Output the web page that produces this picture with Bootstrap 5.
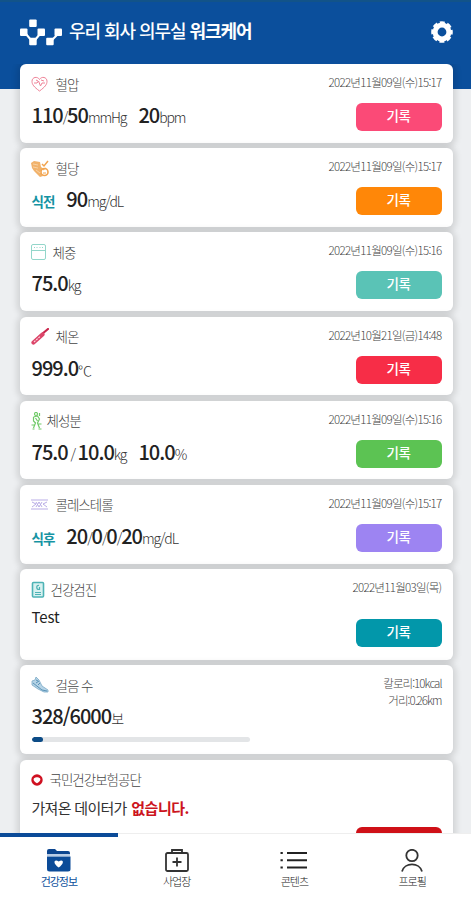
<!DOCTYPE html>
<html lang="ko">
<head>
<meta charset="utf-8">
<meta name="viewport" content="width=device-width, initial-scale=1">
<title>워크케어</title>
<link href="https://cdn.jsdelivr.net/npm/bootstrap@5.3.0/dist/css/bootstrap.min.css" rel="stylesheet">
<style>
body{height:900px;overflow:hidden;background:#edeff1;font-family:"Noto Sans CJK KR",sans-serif;letter-spacing:-1px;color:#222}
svg{display:block;flex:none}
.page-top{height:89px;background:#0b4f9c;border-top:2px solid #125389;padding:16px 17px 0 20px;margin-bottom:-25px}
.page-title{font-size:18px;line-height:26px;font-weight:500;letter-spacing:-1.05px;margin:-1px 0 0 6px;color:#fff}
.page-title b{font-weight:700}
.gear{margin-top:2px}
.feed{height:769px;overflow:hidden;padding:0 18px 0 20px;gap:5.6px}
.tile{flex:none;height:78.6px;background:#fff;border-radius:6px;padding:10px 11.5px 0;box-shadow:0 1px 6px 3px rgba(0,0,0,.12)}
.tile-exam{height:90.6px}.tile-walk{height:89px}.tile-nhis{height:110px}
.tile-name{height:20px;font-size:13.5px;font-weight:300;color:#444;line-height:20px;margin-left:-1px}
.tile-name span{margin-top:-1px}
.tile-val{height:32px;margin-top:5px;font-size:20px;line-height:31px;font-weight:500;white-space:pre}
.unit{font-size:14px;font-weight:300;color:#333;letter-spacing:-1.15px}
.second{margin-left:3px}
.meal{font-size:13.5px;font-weight:700;color:#1593a3;margin-right:12px}
.stamp{font-size:11.5px;font-weight:300;line-height:16px;color:#444;letter-spacing:-.7px;white-space:nowrap}
.stamp + .stamp{margin-top:1px}
.stamp-walk{letter-spacing:-.95px}
.rec{width:86px;height:28px;border-radius:6px;color:#fff;font-size:13.5px;font-weight:500;line-height:25px;text-align:center;margin-top:13px;letter-spacing:-.5px}
.rec-exam{margin-top:24px}
.note{font-size:15px;line-height:23px;margin-top:6px;font-weight:400}
.note-kr{letter-spacing:-.7px;color:#333}
.note-kr b{color:#cc1420;margin-left:1px;letter-spacing:-.45px}
.note-test{letter-spacing:-.1px}
.walkbar{width:218px;height:5px;border-radius:3px;background:#e3e5e7;margin-top:5px}
.walkbar .progress-bar{background:#0c4b86;border-radius:3px}
.tabs{height:67px;background:#fff;border-top:1px solid #eee}
.tab{font-size:11px;font-weight:300;line-height:14px;color:#222;padding-top:15px}
.tab-on{color:#0b4f9c;font-weight:400;border-top:4px solid #0b4b98;padding-top:12px;margin-top:-1px}
.tab svg{margin-bottom:2px}
</style>
<script src="https://cdn.jsdelivr.net/npm/bootstrap@5.3.0/dist/js/bootstrap.bundle.min.js"></script>
</head>
<body>
<header class="page-top d-flex align-items-start">
  <svg width="43" height="29" viewBox="0 0 43 29"><g stroke="#fff" stroke-width="2" fill="none"><path d="M6 16l5 6M20 16l-5 6M32 22l5-5" /></g><g fill="#fff"><rect x="9.200" y="1.500" width="7.500" height="7.500" rx="1"/><rect x="0" y="10.500" width="7.500" height="7.500" rx="1"/><rect x="17.500" y="10.500" width="7.500" height="7.500" rx="1"/><rect x="9.200" y="19.700" width="7.500" height="7.500" rx="1"/><rect x="26.200" y="19.700" width="7.500" height="7.500" rx="1"/><rect x="34.500" y="10.500" width="7.500" height="7.500" rx="1"/></g></svg>
  <h1 class="page-title">우리 회사 의무실 <b>워크케어</b></h1>
  <svg class="ms-auto gear" width="24" height="24" viewBox="0 0 24 24"><circle cx="12" cy="12" r="6.900" fill="none" stroke="#fff" stroke-width="5"/><circle cx="12" cy="12" r="9.300" fill="none" stroke="#fff" stroke-width="3" stroke-dasharray="4.800 2.504" stroke-dashoffset="2.400"/></svg>
</header>

<main class="feed d-flex flex-column">
  <section class="tile d-flex justify-content-between">
    <div>
      <div class="tile-name d-flex align-items-center"><svg width="17" height="16" viewBox="0 0 17 16" class="me-2" fill="none" stroke="#ef8297" stroke-width="1"><path d="M8.500 15C3 11 1 8.500 1 5.300C1 1 6.500 0 8.500 3.500C10.500 0 16 1 16 5.300C16 8.500 14 11 8.500 15zM3 7h3l1.500-2 2 5 1.500-3h3M5 4l2 1M10 4l3 1"/></svg><span>혈압</span></div>
      <div class="tile-val">110<span class="unit">/</span>50<span class="unit">mmHg</span>  <span class="second">20</span><span class="unit">bpm</span></div>
    </div>
    <div class="d-flex flex-column align-items-end"><div class="stamp">2022년11월09일(수)15:17</div><div class="rec" style="background:#fb4a77">기록</div></div>
  </section>
  <section class="tile d-flex justify-content-between">
    <div>
      <div class="tile-name d-flex align-items-center"><svg width="18" height="17" viewBox="0 0 18 17" style="margin-right:7px"><path d="M0 3l3-2 6 1 1 5 3 2-4 3 3 4-3 1-6-6-2-3z" fill="#f1b26b"/><path d="M2 4l5 1M2 7l5 1M5 10l4 3" stroke="#fbe0bd" stroke-width=".7"/><path d="M11 4l2 2 4-5" fill="none" stroke="#f2a44e" stroke-width="1.500"/><circle cx="13.500" cy="12" r="3.500" fill="#fff" stroke="#f2a44e" stroke-width="1.600"/><path d="M12 10l3-2M12 13h3" stroke="#f2a44e"/></svg><span>혈당</span></div>
      <div class="tile-val"><span class="meal">식전</span>90<span class="unit">mg/dL</span></div>
    </div>
    <div class="d-flex flex-column align-items-end"><div class="stamp">2022년11월09일(수)15:17</div><div class="rec" style="background:#ff8708">기록</div></div>
  </section>
  <section class="tile d-flex justify-content-between">
    <div>
      <div class="tile-name d-flex align-items-center"><svg width="15" height="16" viewBox="0 0 15 16" fill="none" stroke="#93d6ca" style="margin-right:7px"><rect x=".5" y=".5" width="14" height="15" rx="1.500"/><path d="M1 6.500h13M3 4l1-1M6 4V3M9 4V3M12 4l-1-1"/></svg><span>체중</span></div>
      <div class="tile-val">75.0<span class="unit">kg</span></div>
    </div>
    <div class="d-flex flex-column align-items-end"><div class="stamp">2022년11월09일(수)15:16</div><div class="rec" style="background:#5ac3b6">기록</div></div>
  </section>
  <section class="tile d-flex justify-content-between">
    <div>
      <div class="tile-name d-flex align-items-center"><svg width="18" height="17" viewBox="0 0 18 17" style="margin-right:7px"><path d="M11 6l6-5M2.500 14.500l8-8" stroke="#c9254b" stroke-width="2.200" stroke-linecap="round"/><path d="M2.500 14.500l9-8" stroke="#dc4569" stroke-width="4.200" stroke-linecap="round"/><path d="M3 14l6-5.500" stroke="#fbd0da" stroke-width="1.200" stroke-dasharray="2 1"/></svg><span>체온</span></div>
      <div class="tile-val">999.0<span class="unit">℃</span></div>
    </div>
    <div class="d-flex flex-column align-items-end"><div class="stamp">2022년10월21일(금)14:48</div><div class="rec" style="background:#f72d47">기록</div></div>
  </section>
  <section class="tile d-flex justify-content-between">
    <div>
      <div class="tile-name d-flex align-items-center"><svg width="11" height="18" viewBox="0 0 10 18" fill="none" stroke="#6fca67" stroke-width="1.200" style="margin-right:5px"><circle cx="4.500" cy="2" r="1.500"/><path d="M2 5l4-1 2 3-2 4 2 5M2 5v4l2 2-2 5M8 1v3M4 6l2 3M0 13h3M6 12h4M1 17h2M7 17h3"/></svg><span>체성분</span></div>
      <div class="tile-val">75.0<span class="unit"> / </span>10.0<span class="unit">kg</span>  <span class="second">10.0</span><span class="unit">%</span></div>
    </div>
    <div class="d-flex flex-column align-items-end"><div class="stamp">2022년11월09일(수)15:16</div><div class="rec" style="background:#5cc353">기록</div></div>
  </section>
  <section class="tile d-flex justify-content-between">
    <div>
      <div class="tile-name d-flex align-items-center"><svg width="17" height="11" viewBox="0 0 17 11" fill="none" stroke="#b9ade6" class="me-2"><path d="M0 1h17M0 10h17M1 3l4 2-4 3M16 3l-4 2 4 3M5 3l3 5 3-5M5 8l3-5 3 5"/></svg><span>콜레스테롤</span></div>
      <div class="tile-val"><span class="meal">식후</span>20<span class="unit">/</span>0<span class="unit">/</span>0<span class="unit">/</span>20<span class="unit">mg/dL</span></div>
    </div>
    <div class="d-flex flex-column align-items-end"><div class="stamp">2022년11월09일(수)15:17</div><div class="rec" style="background:#9d84f2">기록</div></div>
  </section>
  <section class="tile tile-exam d-flex justify-content-between">
    <div>
      <div class="tile-name d-flex align-items-center"><svg width="14" height="17" viewBox="0 0 13 17" fill="none" stroke="#4db3b5" style="margin-right:6px"><rect x="1" y="1.500" width="11" height="14.500" rx="1" fill="#d8f1f0" stroke-width="1.600"/><path d="M4 1.500h5M7.500 4.500c-3-1-3 4 0 4M8 6v3M3.500 11.500h6M3.500 13.500h6" stroke-width="1.200"/></svg><span>건강검진</span></div>
      <div class="note note-test">Test</div>
    </div>
    <div class="d-flex flex-column align-items-end"><div class="stamp">2022년11월03일(목)</div><div class="rec rec-exam" style="background:#0297aa">기록</div></div>
  </section>
  <section class="tile tile-walk d-flex justify-content-between">
    <div>
      <div class="tile-name d-flex align-items-center"><svg width="18" height="16" viewBox="0 0 18 16" style="margin-right:7px"><path d="M1 4l3-1 1-3 3 3 3 6 6 4v2h-4L7 12 1 8z" fill="#b5d3e6" stroke="#7ba9c6" stroke-width=".8"/><path d="M2 6l9 7 5 1M5 6l3-2M7 8l2-2M5 3l2 1" stroke="#5a93b7" fill="none"/></svg><span>걸음 수</span></div>
      <div class="tile-val">328/6000<span class="unit">보</span></div>
      <div class="progress walkbar"><div class="progress-bar" style="width:5.47%"></div></div>
    </div>
    <div class="d-flex flex-column align-items-end"><div class="stamp stamp-walk">칼로리:10kcal</div><div class="stamp stamp-walk">거리:0.26km</div></div>
  </section>
  <section class="tile tile-nhis d-flex justify-content-between">
    <div>
      <div class="tile-name d-flex align-items-center"><svg width="12" height="12" viewBox="0 0 12 12" style="margin-right:7px"><circle cx="6" cy="6" r="5.700" fill="#cf1020"/><path d="M6 9.200C1 7 2 3 6 3.300C10 3 11 7 6 9.200z" fill="#fff"/></svg><span>국민건강보험공단</span></div>
      <div class="note note-kr">가져온 데이터가 <b>없습니다.</b></div>
    </div>
    <div class="align-self-start pt-1"><div class="rec" style="background:#cf1017;margin-top:53px"></div></div>
  </section>
</main>

<nav class="tabs d-flex">
  <div class="tab tab-on col-3 d-flex flex-column align-items-center"><svg width="24" height="23" viewBox="0 0 24 23"><path d="M0 2q0-2 2-2h6l2 2h11q2 0 2 2v2H0z" fill="#0b458f"/><path d="M0 7.500h23.500V20q0 2.500-2.500 2.500H2.500Q0 22.500 0 20z" fill="#0b4b98"/><path d="M0 5h23v2H0z" fill="#b9cde6"/><path d="M11.700 18.500c-7-5-4-9 0-6c4-3 7 1 0 6z" fill="#fff"/></svg>건강정보</div>
  <div class="tab col-3 d-flex flex-column align-items-center"><svg width="24" height="23" viewBox="0 0 24 23" fill="none" stroke="#333" stroke-width="1.800"><rect x="1" y="4" width="22" height="18" rx="1.500"/><path d="M7 4V1h10v3M12 8.500v9M7.500 13h9"/></svg>사업장</div>
  <div class="tab col-3 d-flex flex-column align-items-center"><svg width="28" height="23" viewBox="0 0 28 23" stroke="#222" stroke-width="2"><path d="M7 4h20M7 11.200h20M7 18.500h20M.5 4h2.300M.5 11.200h2.300M.5 18.500h2.300"/></svg>콘텐츠</div>
  <div class="tab col-3 d-flex flex-column align-items-center"><svg width="22" height="23" viewBox="0 0 22 23" fill="none" stroke="#333" stroke-width="1.800"><circle cx="11" cy="6.500" r="5.700"/><path d="M1 22.500C3.500 13 18.500 13 21 22.500"/></svg>프로필</div>
</nav>
</body>
</html>
